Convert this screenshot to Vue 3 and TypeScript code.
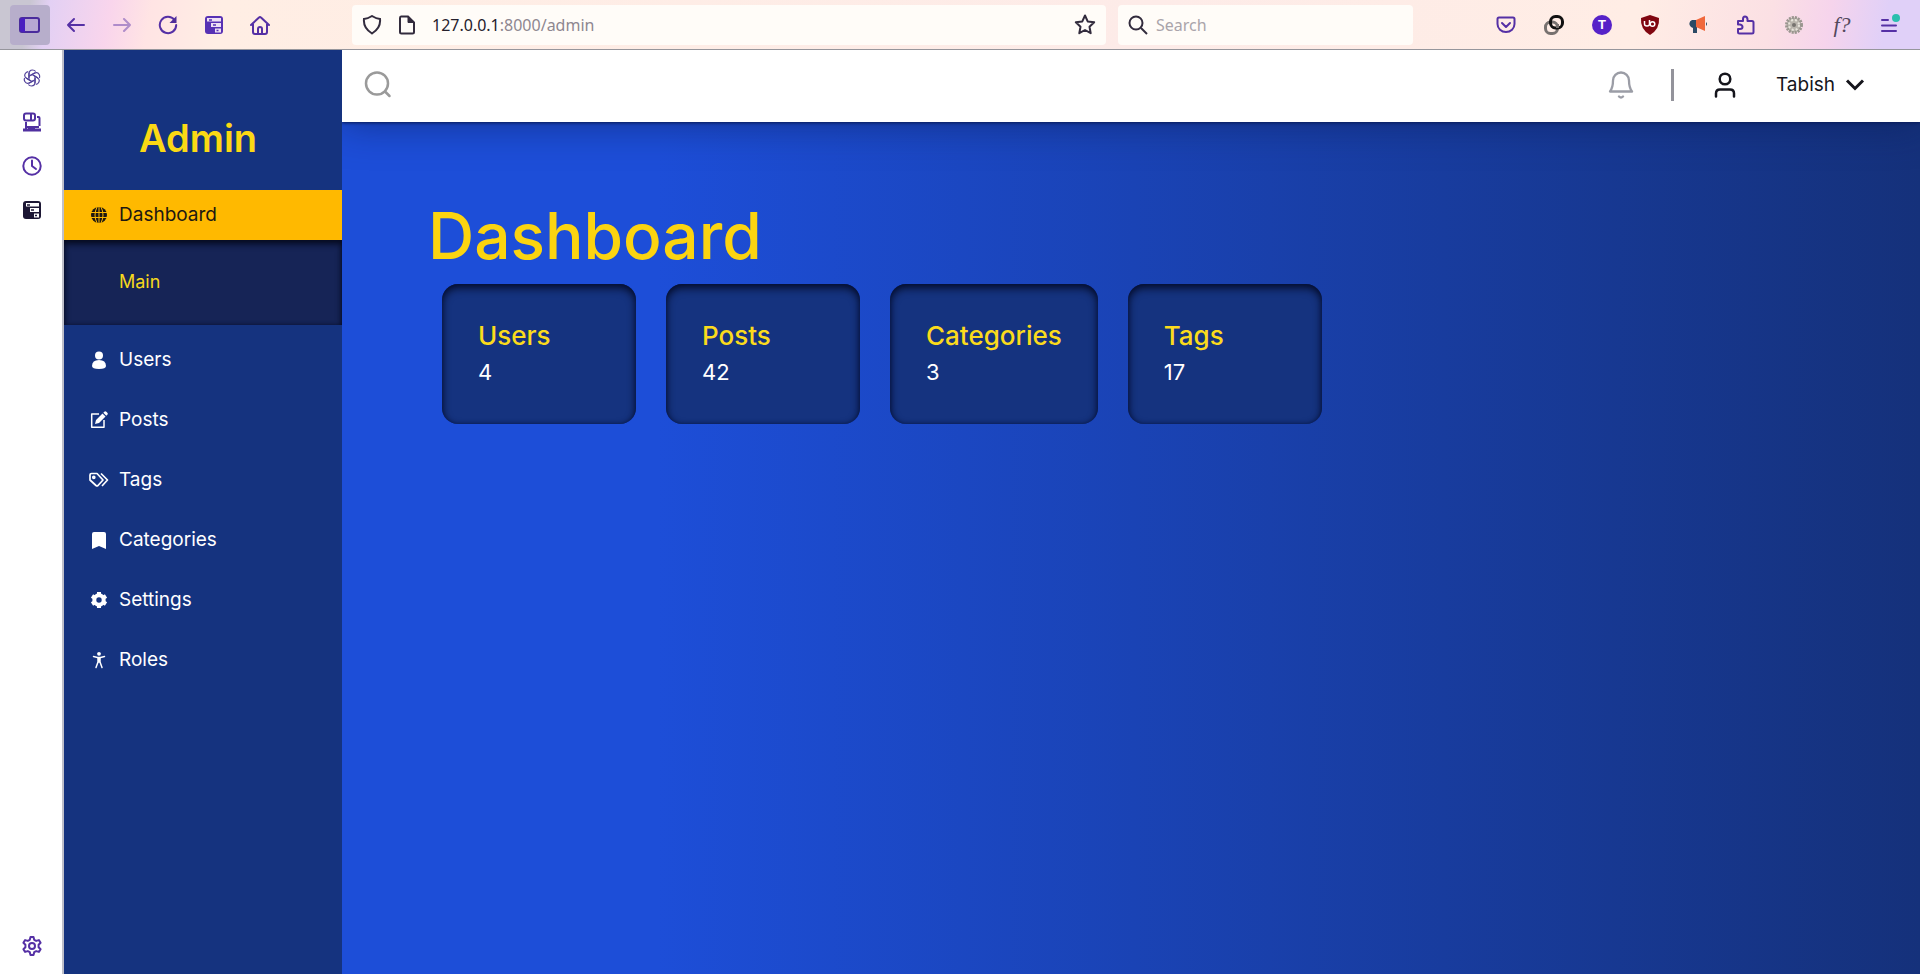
<script setup lang="ts">
interface Item { label: string; icon: string }
interface Stat { label: string; value: number }

const items: Item[] = [
  { label: 'Users', icon: 'user' },
  { label: 'Posts', icon: 'edit' },
  { label: 'Tags', icon: 'tags' },
  { label: 'Categories', icon: 'bookmark' },
  { label: 'Settings', icon: 'gear' },
  { label: 'Roles', icon: 'person' },
]

const stats: Stat[] = [
  { label: 'Users', value: 4 },
  { label: 'Posts', value: 42 },
  { label: 'Categories', value: 3 },
  { label: 'Tags', value: 17 },
]
</script>

<template>
  <div class="window">
    <header class="toolbar">
      <div class="nav-buttons">
        <button class="tool active" aria-label="Toggle sidebar">
          <svg width="22" height="18" viewBox="0 0 22 18"><rect x="1" y="2" width="19" height="14" rx="2" fill="#b7a7d3" stroke="#4a2c9c" stroke-width="2" /><path d="M1 4q0-2 2-2h3v14H3q-2 0-2-2z" fill="#4a1fc0" /></svg>
        </button>
        <button class="tool" aria-label="Back">
          <svg width="20" height="20" viewBox="0 0 20 20"><path d="M18 10H2M8 4l-6 6 6 6" class="line" /></svg>
        </button>
        <button class="tool faded" aria-label="Forward">
          <svg width="20" height="20" viewBox="0 0 20 20"><path d="M2 10h16M12 4l6 6-6 6" class="line" /></svg>
        </button>
        <button class="tool" aria-label="Reload">
          <svg width="20" height="20" viewBox="0 0 20 20"><path d="M16.500 5A8.200 8.200 0 1 0 18.200 10" class="line" /><path d="M18.500 1v7h-7z" fill="#4f2d99" /></svg>
        </button>
        <button class="tool" aria-label="Tab manager">
          <svg width="20" height="20" viewBox="0 0 20 20"><rect x="1" y="1" width="18" height="18" rx="3" fill="#5731b4" /><path d="M3 3h14v3.500H3zM7 8h10v4H7zM11 13.500h6v4h-6z" fill="#eee0f4" /><path d="M5 5h3M9 10h3M12.500 15.500h2" stroke="#5731b4" stroke-width="1.500" /></svg>
        </button>
        <button class="tool" aria-label="Home">
          <svg width="20" height="20" viewBox="0 0 20 20"><path d="M1 10l8-7.500q1-1 2 0L19 10M3 9v8q0 2 2 2h10q2 0 2-2V9M8 19v-5q0-2 2-2t2 2v5" class="line" /></svg>
        </button>
      </div>
      <div class="address">
        <svg width="20" height="20" viewBox="0 0 20 20"><path d="M10 1q4 2.500 8 3 1 9-8 14.500Q1 13 2 4q4-.5 8-3z" class="ink" /></svg>
        <svg width="18" height="20" viewBox="0 0 18 20"><path d="M3 1.500h7l6 6V17q0 1.500-1.500 1.500h-11Q2 18.500 2 17V3q0-1.500 1-1.500z" class="ink" /><path d="M10 1.500v6h6z" fill="#322b3d" stroke="#322b3d" /></svg>
        <a class="url" href="#"><b>127.0.0.1</b>:8000/admin</a>
        <button class="star" aria-label="Bookmark this page">
          <svg width="22" height="22" viewBox="0 0 22 22"><path d="M11 1.500l2.700 5.900 6.500.8-4.700 4.500 1.200 6.500L11 16l-5.700 3.200 1.200-6.500L1.800 8.200l6.500-.8z" class="ink" stroke-linejoin="round" /></svg>
        </button>
      </div>
      <label class="search">
        <svg width="20" height="20" viewBox="0 0 20 20"><circle cx="8" cy="8" r="6.500" class="ink" /><path d="M13 13l6 6" class="ink" /></svg>
        <input type="text" placeholder="Search" aria-label="Search the web" />
      </label>
      <div class="extensions">
        <button class="tool" aria-label="Pocket">
          <svg width="20" height="18" viewBox="0 0 20 18"><path d="M3 1.500h14q1.500 0 1.500 1.500v5a8.500 8 0 0 1-17 0V3q0-1.500 1.500-1.500zM6 7l4 4 4-4" class="line" /></svg>
        </button>
        <button class="tool" aria-label="Containers">
          <svg width="20" height="20" viewBox="0 0 20 20" fill="none" stroke-width="3"><rect x="1.500" y="7" width="12" height="11.500" rx="5" stroke="#77716f" /><rect x="6.500" y="1.500" width="12" height="11.500" rx="5" stroke="#111" /><path d="M13.500 9v4" stroke="#77716f" /></svg>
        </button>
        <button class="tool" aria-label="Account"><span class="avatar">T</span></button>
        <button class="tool" aria-label="uBlock">
          <svg width="20" height="20" viewBox="0 0 20 20"><path d="M10 0l9 3q1 11-9 17Q0 14 1 3z" fill="#800610" /><path d="M4.500 6v3q0 2 2.500 2t2.500-2V5" fill="none" stroke="#fff" stroke-width="1.500" /><circle cx="12.500" cy="9" r="2.300" fill="none" stroke="#fff" stroke-width="1.500" /></svg>
        </button>
        <button class="tool" aria-label="Megaphone">
          <svg width="20" height="20" viewBox="0 0 20 20"><path d="M9 5H4a4 4 0 0 0-1 7l2 1v5h4v-5z" fill="#2b4a65" /><path d="M8 5l9-4v15l-9-4z" fill="#f0683c" /><path d="M18 7q2 2 0 4z" fill="#29445c" /></svg>
        </button>
        <button class="tool" aria-label="Extensions">
          <svg width="20" height="20" viewBox="0 0 20 20"><path d="M2 6h5V4q0-2.500 2-2.500T11.500 4v2H16q1.500 0 1.500 1.500V17q0 1.500-1.500 1.500H3.500Q2 18.500 2 17v-3h2q2.500 0 2.500-2T4 9.500H2z" class="line" /></svg>
        </button>
        <button class="tool" aria-label="Cog">
          <svg width="20" height="20" viewBox="0 0 20 20"><circle cx="10" cy="10" r="7.500" fill="#b9b4ac" stroke="#9a968f" stroke-width="3" stroke-dasharray="2 1" /><circle cx="10" cy="10" r="5" fill="none" stroke="#e8e5dc" stroke-width="2" stroke-dasharray="2 2" /><circle cx="10" cy="10" r="2" fill="#77736f" /></svg>
        </button>
        <button class="tool fx" aria-label="Font finder"><i>f?</i></button>
        <button class="tool" aria-label="Menu">
          <svg width="22" height="22" viewBox="0 0 22 22"><path d="M3 6h6M3 11.500h14M3 17h14" class="line" /><circle cx="17" cy="4" r="4" fill="#2abfae" /></svg>
        </button>
      </div>
    </header>

    <div class="below">
      <aside class="rail">
        <button class="tool" aria-label="Chat">
          <svg width="18" height="18" viewBox="0 0 18 18" fill="none" stroke="#51419a" stroke-width="1.200" stroke-linejoin="round"><g v-for="n in 6" :key="n" :transform="`rotate(${n * 60} 9 9)`"><path d="M6 10.700V5q0-4 3.500-4 2 0 3.200 1.500M7.500 6.300L12 3.800" /></g></svg>
        </button>
        <button class="tool" aria-label="Devices">
          <svg width="20" height="20" viewBox="0 0 20 20" fill="none" stroke="#5030a0" stroke-width="2"><rect x="2" y="1.500" width="11" height="7" rx="2" /><path d="M9 2v6M15 5h1.500q1 0 1 1v8M4 10v7M4 15h13" /><path d="M1 18h18M6 16.500h7" stroke-width="3" /></svg>
        </button>
        <button class="tool" aria-label="History">
          <svg width="20" height="20" viewBox="0 0 20 20"><circle cx="10" cy="10" r="8.700" class="line" /><path d="M10 4.500V10l4 3" class="line" /></svg>
        </button>
        <button class="tool" aria-label="Tabs">
          <svg width="20" height="20" viewBox="0 0 20 20"><rect x="1" y="1" width="18" height="18" rx="3" fill="#1c1734" /><path d="M4 3h13v3.500H4zM8 8h9v4H8zM12 13.500h5v4h-5z" fill="#fff" /><path d="M5 5h3M9 10h3M13 15.500h2" stroke="#1c1734" stroke-width="1.500" /></svg>
        </button>
        <button class="tool last" aria-label="Sidebar settings">
          <svg width="20" height="20" viewBox="0 0 20 20"><path d="M8.500 1h3l.7 2.800 2 1.100 2.700-.8 1.700 2.700-2 2v2.400l2 2-1.700 2.700-2.700-.8-2 1.100-.7 2.800h-3l-.7-2.800-2-1.100-2.700.8-1.700-2.700 2-2V8.800l-2-2 1.700-2.700 2.700.8 2-1.100z" class="line" /><circle cx="10" cy="10" r="3" class="line" /></svg>
        </button>
      </aside>

      <nav class="sidebar">
        <h2 class="brand">Admin</h2>
        <a class="item current" href="#">
          <svg width="16" height="16" viewBox="0 0 16 16"><circle cx="8" cy="8" r="8" fill="#1d1812" /><path d="M0 5.500h16M0 10.500h16M8 0v16M6 0Q2 8 6 16M10 0q4 8 0 16" fill="none" stroke="#fdb800" /></svg>
          <span>Dashboard</span>
        </a>
        <div class="submenu"><a href="#">Main</a></div>
        <a v-for="item in items" :key="item.label" class="item" href="#">
          <svg v-if="item.icon === 'user'" width="18" height="18" viewBox="0 0 18 18"><circle cx="9" cy="4.500" r="4" fill="#fff" /><path d="M2 15q0-6 7-6t7 6q0 3-7 3t-7-3z" fill="#fff" /></svg>
          <svg v-else-if="item.icon === 'edit'" width="18" height="18" viewBox="0 0 18 18"><path d="M9 3H1.700v13.300H14V9" fill="none" stroke="#fff" stroke-width="1.500" stroke-linejoin="round" /><path d="M5 13l1-4 6.500-6.500 3 3L9 12zM13.300 1.700l1-1q1-1 2 0l1 1q1 1 0 2l-1 1z" fill="#fff" /></svg>
          <svg v-else-if="item.icon === 'tags'" width="20" height="18" viewBox="0 0 20 18" fill="none" stroke="#fff" stroke-width="1.700" stroke-linejoin="round"><path d="M1 4q0-1.500 1.500-1.500H8l6 6.500-5 5.500q-1 .7-2 0L1 9zM12 2.500l6.500 6.500-5.500 6" /><circle cx="4.800" cy="6.300" r="1" /></svg>
          <svg v-else-if="item.icon === 'bookmark'" width="18" height="18" viewBox="0 0 18 18"><path d="M2 3q0-2 2-2h10q2 0 2 2v15l-7-3-7 3z" fill="#fff" /></svg>
          <svg v-else-if="item.icon === 'gear'" width="18" height="18" viewBox="0 0 18 18" fill="none" stroke="#fff"><circle cx="9" cy="9" r="4.700" stroke-width="4" /><path d="M9 1v3M9 14v3M2 5l3 2M13 11l3 2M2 13l3-2M13 7l3-2" stroke-width="4" /></svg>
          <svg v-else width="18" height="18" viewBox="0 0 18 18"><circle cx="9" cy="2.800" r="1.900" fill="#fff" /><path d="M3.500 5.500l4 1h3l4-1M8 7v4l-2 5.500M10 7v4l2 5.500M9 7v4" fill="none" stroke="#fff" stroke-width="1.500" stroke-linecap="round" stroke-linejoin="round" /></svg>
          <span>{{ item.label }}</span>
        </a>
      </nav>

      <div class="page">
        <header class="topbar">
          <button class="plain" aria-label="Search">
            <svg width="28" height="28" viewBox="0 0 28 28" fill="none" stroke="#9a9a9a" stroke-width="2.500" stroke-linecap="round"><circle cx="13" cy="12.500" r="11" /><path d="M21 20.500l4.500 4.500" /></svg>
          </button>
          <div class="account">
            <button class="plain" aria-label="Notifications">
              <svg width="26" height="28" viewBox="0 0 26 28" fill="none" stroke="#9b9da6" stroke-width="2.300" stroke-linecap="round" stroke-linejoin="round"><path d="M2 20.500q3-4 3-11a8 8 0 0 1 16 0q0 7 3 11zM11 25.500q2 2 4 0" /></svg>
            </button>
            <span class="divider"></span>
            <svg width="22" height="26" viewBox="0 0 22 26" fill="none" stroke="#15151c" stroke-width="2.500" stroke-linecap="round"><circle cx="11" cy="7" r="5.300" /><path d="M2 24.500v-3q0-4 4-4h10q4 0 4 4v3" /></svg>
            <button class="plain name">
              <span>Tabish</span>
              <svg width="20" height="12" viewBox="0 0 20 12" fill="none" stroke="#15151c" stroke-width="3"><path d="M2 1.500l8 8 8-8" /></svg>
            </button>
          </div>
        </header>
        <main class="content">
          <h1>Dashboard</h1>
          <div class="cards">
            <section v-for="stat in stats" :key="stat.label" class="card">
              <h3>{{ stat.label }}</h3>
              <p>{{ stat.value }}</p>
            </section>
          </div>
        </main>
      </div>
    </div>
  </div>
</template>

<style>
body { margin: 0; }
</style>

<style scoped>
* { box-sizing: border-box; }
.window { display: flex; flex-direction: column; min-height: 100vh; font-family: Inter, "Liberation Sans", sans-serif; }
button { display: flex; align-items: center; justify-content: center; padding: 0; border: 0; background: none; font: inherit; color: inherit; }
svg { display: block; flex: none; }
a { color: inherit; text-decoration: none; }
h1, h2, h3, p { margin: 0; }

.toolbar { display: flex; align-items: center; height: 50px; border-bottom: 1px solid #96969c; background: linear-gradient(100deg, #c9c6d2 0 30px, #e3d0f4 50px, #f9d5ec 110px, #ffe4e4 150px, #ffeee4 220px, #fdebe8 60%, #ffede5 85%, #fbe0e4 92%, #f6d4ec 95%, #e0d0f8 98%); font-family: "Noto Sans", "Open Sans", sans-serif; }
.nav-buttons { display: flex; gap: 6px; width: 352px; padding-left: 10px; }
.tool { width: 40px; height: 40px; }
.active { border-radius: 4px; background: #b7aecb; }
.faded { opacity: .45; }
.line { fill: none; stroke: #5530a5; stroke-width: 2; stroke-linecap: round; stroke-linejoin: round; }
.ink { fill: none; stroke: #322b3d; stroke-width: 2; }
.address { display: flex; flex: 1; align-items: center; gap: 16px; max-width: 754px; height: 40px; padding: 0 10px; border-radius: 4px; background: #fffcf8; }
.url { flex: 1; font-size: 16px; color: #8e8790; }
.url b { font-weight: 400; color: #25202c; }
.star { width: 22px; height: 40px; }
.search { display: flex; align-items: center; gap: 8px; width: 295px; height: 40px; margin-left: 12px; padding-left: 10px; border-radius: 4px; background: #fffcf8; }
.search input { flex: 1; min-width: 0; padding: 0; border: 0; outline: 0; background: none; font: inherit; font-size: 16px; }
.search input::placeholder { color: #aaa4aa; opacity: 1; }
.extensions { display: flex; gap: 8px; margin-left: auto; padding-right: 10px; }
.avatar { width: 20px; border-radius: 50%; background: #5622c8; font: 700 13px/20px "Liberation Sans", sans-serif; color: #fff; }
.fx { font: 22px/24px "Liberation Serif", serif; color: #53485c; }

.below { display: flex; flex: 1; }
.rail { display: flex; flex-direction: column; align-items: center; gap: 4px; width: 64px; padding: 8px 0 8px 2px; border-right: 2px solid #bfc0ca; background: #fff; }
.last { margin-top: auto; }

.sidebar { width: 278px; background: #15337f; color: #fff; }
.brand { padding: 64px 10px 28px 0; font-size: 38px; line-height: 48px; font-weight: 600; text-align: center; color: #fbd914; }
.item { display: flex; align-items: center; gap: 10px; height: 60px; padding-left: 25px; font-size: 19px; line-height: 28px; }
.item svg { width: 20px; }
.current { height: 50px; background: #ffb900; color: #1d1812; }
.submenu { height: 85px; margin-bottom: 5px; padding: 30px 0 0 55px; background: #162456; box-shadow: inset 0 4px 6px #060b20, inset 0 0 4px #0b1538; font-size: 18px; line-height: 24px; color: #f7d81c; }

.page { display: flex; flex: 1; flex-direction: column; min-width: 0; overflow: hidden; }
.topbar { position: relative; display: flex; align-items: center; justify-content: space-between; height: 72px; padding: 0 55px 2px 22px; background: #fff; box-shadow: 0 0 40px #0a1c5899, 0 1px 3px #0a1c58; }
.account { display: flex; align-items: center; color: #15151c; }
.divider { width: 3px; height: 32px; margin: 0 40px 0 37px; background: #93939b; }
.name { gap: 10px; margin-left: 40px; font-size: 19px; line-height: 28px; }
.content { flex: 1; padding: 78px 86px; background: linear-gradient(90deg, #1d4ed8 20%, #15317b 100%); }
h1 { font-size: 64px; line-height: 72px; font-weight: 500; color: #fbd410; }
.cards { display: flex; gap: 30px; padding: 12px 14px; }
.card { min-width: 194px; height: 140px; padding: 34px 36px; border-radius: 16px; background: #15337f; box-shadow: inset 0 4px 8px #050d2c, inset 0 0 4px #0b1e58; color: #fff; }
.card h3 { font-size: 26px; line-height: 36px; font-weight: 500; color: #fbdb1c; }
.card p { font-size: 22px; line-height: 36px; }
</style>
